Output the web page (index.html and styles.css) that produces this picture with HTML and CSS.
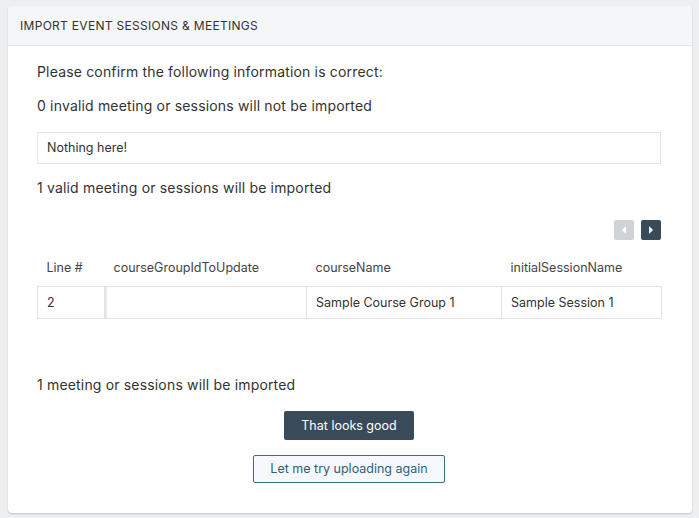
FILE: index.html
```html
<!DOCTYPE html>
<html lang="en">
<head>
    <meta charset="UTF-8">
    <title>Import Event Sessions &amp; Meetings</title>
    <link rel="stylesheet" href="styles.css">
</head>
<body>
<div class="panel">
    <div class="panel-head">Import Event Sessions &amp; Meetings</div>
    <div class="panel-body">
        <p class="line">Please confirm the following information is correct:</p>
        <p class="line">0 invalid meeting or sessions will not be imported</p>
        <div class="empty">Nothing here!</div>
        <p class="line">1 valid meeting or sessions will be imported</p>

        <!-- 左右翻页 -->
        <div class="pager">
            <button class="pager_btn is_off" type="button"><span class="tri tri_left"></span></button>
            <button class="pager_btn" type="button"><span class="tri tri_right"></span></button>
        </div>

        <table class="grid">
            <colgroup>
                <col class="c1"><col class="c2"><col class="c3"><col class="c4">
            </colgroup>
            <thead>
                <tr>
                    <th>Line #</th>
                    <th>courseGroupIdToUpdate</th>
                    <th>courseName</th>
                    <th>initialSessionName</th>
                </tr>
            </thead>
            <tbody>
                <tr>
                    <td>2</td>
                    <td class="shade"></td>
                    <td>Sample Course Group 1</td>
                    <td>Sample Session 1</td>
                </tr>
            </tbody>
        </table>

        <p class="line total">1 meeting or sessions will be imported</p>

        <div class="actions">
            <button class="btn btn_main" type="button">That looks good</button>
            <button class="btn btn_ghost" type="button">Let me try uploading again</button>
        </div>
    </div>
</div>
</body>
</html>
```

FILE: styles.css
```css
*{margin: 0;padding: 0;box-sizing: border-box;}
body{
    background-color: #eeeff1;
    padding: 6px 7px 6px 8px;
    font-family: Inter, "Noto Sans", "Liberation Sans", sans-serif;
    color: #333;
}
.panel{
    background-color: #fff;
    border-radius: 4px;
    box-shadow: 0 1px 2px rgba(0, 0, 0, 0.18);
    overflow: hidden;
}
.panel-head{
    height: 40px;
    line-height: 40px;
    padding-left: 12px;
    font-size: 12px;
    letter-spacing: 0.3px;
    text-transform: uppercase;
    color: #333;
    background-color: #f5f6f8;
    border-bottom: 1px solid #e1e3e6;
}
.panel-body{
    padding: 16px 31px 30px 29px;
}
.line{
    font-size: 14px;
    line-height: 20px;
    letter-spacing: 0.17px;
    margin-top: 14px;
}
.line:first-child{
    margin-top: 0;
}
.empty{
    margin-top: 16px;
    height: 32px;
    line-height: 30px;
    padding-left: 9px;
    font-size: 12.5px;
    border: 1px solid #e3e5e8;
}

/* 翻页按钮 */
.pager{
    display: flex;
    justify-content: flex-end;
    gap: 7px;
    margin-top: 22px;
}
.pager_btn{
    width: 20px;
    height: 20px;
    border: none;
    border-radius: 2px;
    background-color: #394b59;
    display: flex;
    align-items: center;
    justify-content: center;
}
.pager_btn.is_off{
    background-color: #ced3d8;
}
.tri{
    width: 0;
    height: 0;
    border-top: 4px solid transparent;
    border-bottom: 4px solid transparent;
}
.tri_left{
    border-right: 4px solid #fff;
}
.tri_right{
    border-left: 4px solid #fff;
}

/* 表格 */
.grid{
    width: 100%;
    margin-top: 10px;
    border-collapse: collapse;
    table-layout: fixed;
    font-size: 12.5px;
}
.c1{width: 67px;}
.c2{width: 202px;}
.c3{width: 195px;}
.c4{width: 160px;}
.grid th{
    height: 36px;
    padding-left: 9px;
    text-align: left;
    font-weight: normal;
    color: #444;
}
.grid td{
    height: 32px;
    padding-left: 9px;
    border: 1px solid #e2e4e7;
}
.grid td.shade{
    box-shadow: inset 3px 0 3px -2px rgba(0, 0, 0, 0.18);
}

.line.total{
    margin-top: 56px;
}
.actions{
    display: flex;
    flex-direction: column;
    align-items: center;
}
.btn{
    font-family: inherit;
    font-size: 12.5px;
    border-radius: 2px;
    cursor: pointer;
}
.btn_main{
    margin-top: 16px;
    height: 29px;
    padding: 0 17px;
    color: #fff;
    background-color: #394b59;
    border: none;
}
.btn_ghost{
    margin-top: 15px;
    height: 28px;
    padding: 0 16px;
    color: #2d6073;
    background-color: #f5f8fc;
    border: 1px solid #3c6e80;
}
```
